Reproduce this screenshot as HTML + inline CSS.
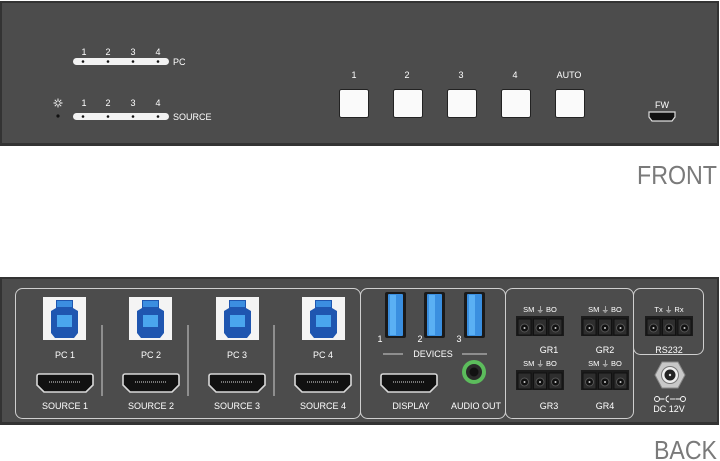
<!DOCTYPE html>
<html><head><meta charset="utf-8"><style>
html,body{margin:0;padding:0;background:#fff;width:720px;height:461px;overflow:hidden}
svg{display:block}
text{font-family:"Liberation Sans",sans-serif}
</style></head><body>
<svg width="720" height="461" viewBox="0 0 720 461" xmlns="http://www.w3.org/2000/svg">
<defs>
<g id="usbb">
<rect x="0" y="0" width="43" height="43" fill="#f4f4f4"/>
<path d="M13 3 h17 v8 l5 3 v22 l-4 5 h-19 l-4 -5 v-22 l5 -3z" fill="#1f56b0"/>
<rect x="14" y="4" width="15" height="6" fill="#3c8ee0"/>
<rect x="14" y="18" width="15" height="12" fill="#4aa6ee"/>
</g>
<g id="hdmi">
<path d="M2 1 h52 a2 2 0 0 1 2 2 v9 l-7 7 h-42 l-7 -7 v-9 a2 2 0 0 1 2 -2z" fill="#111" stroke="#d8d8d8" stroke-width="1.6"/>
<line x1="12" y1="9" x2="44" y2="9" stroke="#777" stroke-width="2" stroke-dasharray="1 1"/>
</g>
<g id="usba">
<rect x="0" y="0" width="21" height="46" rx="2" fill="#1a1a1a"/>
<rect x="3" y="2" width="15" height="42" rx="1" fill="#3a8fe0"/>
<rect x="5" y="3" width="6" height="40" fill="#5ab0f4"/>
</g>
<g id="term">
<rect x="0" y="0" width="48" height="20" fill="#1c1c1c"/>
<g fill="#2e2e2e" stroke="#111"><rect x="2" y="3" width="13" height="16"/><rect x="17.5" y="3" width="13" height="16"/><rect x="33" y="3" width="13" height="16"/></g>
<g fill="#111" stroke="#555"><circle cx="8.5" cy="12" r="4"/><circle cx="24" cy="12" r="4"/><circle cx="39.5" cy="12" r="4"/></g>
<g fill="#ccc"><circle cx="8.5" cy="12" r="1"/><circle cx="24" cy="12" r="1"/><circle cx="39.5" cy="12" r="1"/></g>
</g>
</defs>

<!-- FRONT -->
<rect x="0" y="1" width="719" height="145" fill="#333"/>
<rect x="2" y="3" width="715" height="140" fill="#4c4c4c"/>
<g fill="#fff" font-size="9" text-anchor="middle">
<text x="84" y="55">1</text><text x="108" y="55">2</text><text x="133" y="55">3</text><text x="158" y="55">4</text>
<text x="84" y="106">1</text><text x="108" y="106">2</text><text x="133" y="106">3</text><text x="158" y="106">4</text>
</g>
<rect x="73" y="58" width="96" height="7" rx="3.5" fill="#f2f2f2"/>
<rect x="73" y="113" width="96" height="7" rx="3.5" fill="#f2f2f2"/>
<g fill="#111"><circle cx="83" cy="61.5" r="1.3"/><circle cx="108" cy="61.5" r="1.3"/><circle cx="133" cy="61.5" r="1.3"/><circle cx="158" cy="61.5" r="1.3"/>
<circle cx="83" cy="116.5" r="1.3"/><circle cx="108" cy="116.5" r="1.3"/><circle cx="133" cy="116.5" r="1.3"/><circle cx="158" cy="116.5" r="1.3"/>
<circle cx="58" cy="116" r="1.6"/></g>
<text x="173" y="65" fill="#fff" font-size="9">PC</text>
<text x="173" y="120" fill="#fff" font-size="9">SOURCE</text>
<g stroke="#fff" stroke-width="0.9" fill="none"><circle cx="58" cy="103" r="2.2"/>
<path d="M58 98.5v1.5M58 106v1.5M53.5 103h1.5M61 103h1.5M54.8 99.8l1 1M60.2 105.2l1 1M54.8 106.2l1-1M60.2 100.8l1-1"/></g>
<g fill="#fff" font-size="9" text-anchor="middle">
<text x="354" y="78">1</text><text x="407" y="78">2</text><text x="461" y="78">3</text><text x="515" y="78">4</text><text x="569" y="78">AUTO</text>
<text x="662" y="108">FW</text>
</g>
<g fill="#fafafa" stroke="#222" stroke-width="1">
<rect x="339.5" y="89.5" width="29" height="28" rx="2"/><rect x="393.5" y="89.5" width="29" height="28" rx="2"/>
<rect x="447.5" y="89.5" width="29" height="28" rx="2"/><rect x="501.5" y="89.5" width="29" height="28" rx="2"/>
<rect x="555.5" y="89.5" width="29" height="28" rx="2"/>
</g>
<path d="M649 112 h26 v5 l-3 4 h-20 l-3 -4z" fill="#111" stroke="#ddd" stroke-width="1.2"/>
<text x="717" y="184" fill="#7a7a7a" font-size="26" text-anchor="end" font-weight="300" textLength="80" lengthAdjust="spacingAndGlyphs">FRONT</text>

<!-- BACK -->
<rect x="0" y="277" width="719" height="148" fill="#333"/>
<rect x="2" y="279" width="715" height="143" fill="#4c4c4c"/>
<g fill="none" stroke="#cfcfcf" stroke-width="1">
<rect x="15.5" y="288.5" width="345" height="130" rx="7"/>
<rect x="360.5" y="288.5" width="145" height="130" rx="7"/>
<rect x="505.5" y="288.5" width="128" height="130" rx="7"/>
<rect x="633.5" y="288.5" width="70" height="66" rx="7"/>
<line x1="102" y1="325" x2="102" y2="396"/><line x1="188" y1="325" x2="188" y2="396"/><line x1="274" y1="325" x2="274" y2="396"/>
<line x1="383" y1="354" x2="403" y2="354"/><line x1="462" y1="354" x2="487" y2="354"/>
</g>
<use href="#usbb" x="43" y="297"/><use href="#usbb" x="129" y="297"/><use href="#usbb" x="216" y="297"/><use href="#usbb" x="302" y="297"/>
<use href="#hdmi" x="37" y="373"/><use href="#hdmi" x="123" y="373"/><use href="#hdmi" x="209" y="373"/><use href="#hdmi" x="295" y="373"/>
<use href="#hdmi" x="381" y="373"/>
<g fill="#fff" font-size="9" text-anchor="middle">
<text x="65" y="358">PC 1</text><text x="151" y="358">PC 2</text><text x="237" y="358">PC 3</text><text x="323" y="358">PC 4</text>
<text x="65" y="409">SOURCE 1</text><text x="151" y="409">SOURCE 2</text><text x="237" y="409">SOURCE 3</text><text x="323" y="409">SOURCE 4</text>
<text x="411" y="409">DISPLAY</text><text x="476" y="409">AUDIO OUT</text>
<text x="433" y="357">DEVICES</text>
<text x="380" y="342">1</text><text x="420" y="342">2</text><text x="459" y="342">3</text>
<text x="549" y="353">GR1</text><text x="605" y="353">GR2</text><text x="549" y="409">GR3</text><text x="605" y="409">GR4</text>
<text x="669" y="353">RS232</text><text x="669" y="412">DC 12V</text>
</g>
<g fill="#fff" font-size="7.5" text-anchor="middle">
<text x="540" y="312">SM ⏚ BO</text><text x="605" y="312">SM ⏚ BO</text>
<text x="540" y="366">SM ⏚ BO</text><text x="605" y="366">SM ⏚ BO</text>
<text x="669" y="312">Tx ⏚ Rx</text>
</g>
<use href="#usba" x="385" y="292"/><use href="#usba" x="424" y="292"/><use href="#usba" x="464" y="292"/>
<circle cx="474" cy="372" r="12" fill="#5cbc5c"/><circle cx="474" cy="372" r="8" fill="#2a2a2a"/><circle cx="474" cy="372" r="4.5" fill="#111"/>
<use href="#term" x="516" y="316"/><use href="#term" x="581" y="316"/>
<use href="#term" x="516" y="370"/><use href="#term" x="581" y="370"/>
<use href="#term" x="645" y="316"/>
<path d="M662 362 h16 l7 13 l-7 13 h-16 l-7 -13z" fill="#c8c8c8" stroke="#888"/>
<circle cx="670" cy="375" r="8.5" fill="#eee" stroke="#777"/><circle cx="670" cy="375" r="5.5" fill="#222"/><circle cx="670" cy="375" r="1.2" fill="#ddd"/>
<g stroke="#fff" fill="none" stroke-width="0.9"><circle cx="657" cy="399" r="2.5"/><circle cx="683" cy="399" r="2.5"/><path d="M659.5 399h5M675.5 399h5M669 396a3 3 0 1 0 0 6"/><path d="M670 399h5"/></g>
<text x="717" y="459" fill="#7a7a7a" font-size="26" text-anchor="end" font-weight="300" textLength="63" lengthAdjust="spacingAndGlyphs">BACK</text>
</svg>
</body></html>
